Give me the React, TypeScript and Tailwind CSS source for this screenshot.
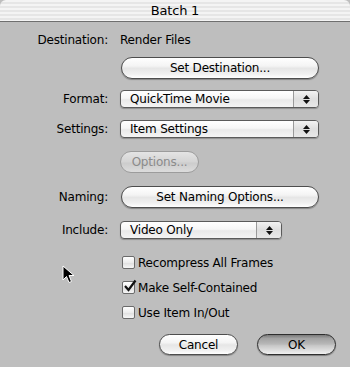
import React from 'react';

const font = "font-['DejaVu_Sans','Liberation_Sans',sans-serif]";

// glossy aqua push button
const AquaButton: React.FC<{ label: string; className?: string; disabled?: boolean; isDefault?: boolean }> = ({
  label,
  className = '',
  disabled,
  isDefault,
}) => {
  const skin = isDefault
    ? 'border-[#2e2e2e] bg-[linear-gradient(to_bottom,#7a7a7a_0%,#a2a2a2_18%,#b8b8b8_48%,#c6c6c6_55%,#e2e2e2_85%,#f0f0f0_100%)] shadow-[0_1px_1px_rgba(0,0,0,0.35)]'
    : disabled
    ? 'border-[#9c9c9c] bg-[linear-gradient(to_bottom,#e4e4e4_0%,#d4d4d4_50%,#cccccc_55%,#dcdcdc_100%)] text-[#8b8b8b]'
    : 'border-[#4d4d4d] bg-[linear-gradient(to_bottom,#ffffff_0%,#f4f4f4_40%,#e6e6e6_52%,#f0f0f0_80%,#ffffff_100%)] shadow-[0_1px_1px_rgba(0,0,0,0.3)]';
  return (
    <div
      className={`flex items-center justify-center rounded-full border text-[12px] leading-none tracking-[-0.2px] ${skin} ${className}`}
    >
      {label}
    </div>
  );
};

// popup menu with the up/down arrows on the right
const Popup: React.FC<{ value: string; width: string }> = ({ value, width }) => (
  <div
    className={`flex h-[18px] ${width} items-stretch overflow-hidden rounded-[4px] border border-[#5a5a5a] bg-[linear-gradient(to_bottom,#ffffff_0%,#f6f6f6_45%,#e9e9e9_55%,#f4f4f4_100%)] shadow-[0_1px_1px_rgba(0,0,0,0.25)]`}
  >
    <div className="flex flex-1 items-center pl-[9px] text-[12px] leading-none tracking-[-0.2px]">{value}</div>
    <div className="flex w-[25px] flex-col items-center justify-center gap-[1px] border-l border-[#9a9a9a] bg-[linear-gradient(to_bottom,#f2f2f2,#dedede_50%,#e8e8e8)]">
      <svg width="7" height="4" viewBox="0 0 7 4">
        <path d="M3.5 0 L7 4 L0 4 Z" fill="#111" />
      </svg>
      <svg width="7" height="4" viewBox="0 0 7 4">
        <path d="M0 0 L7 0 L3.5 4 Z" fill="#111" />
      </svg>
    </div>
  </div>
);

const Checkbox: React.FC<{ label: string; checked?: boolean }> = ({ label, checked }) => (
  <div className="flex h-[25px] items-center">
    <div className="relative ml-[2px] h-[13px] w-[13px] rounded-[2px] border border-[#6b6b6b] bg-[linear-gradient(to_bottom,#ffffff,#ececec_50%,#e0e0e0_55%,#f6f6f6)]">
      {checked && (
        <svg className="absolute left-[0px] top-[-3px]" width="14" height="14" viewBox="0 0 14 14">
          <path d="M2 7 L5.5 11 L12.5 1.5" stroke="#111" strokeWidth="2.2" fill="none" strokeLinejoin="miter" />
        </svg>
      )}
    </div>
    <span className="ml-[3px] text-[12px] leading-none tracking-[-0.2px]">{label}</span>
  </div>
);

const Label: React.FC<{ text: string }> = ({ text }) => (
  <div className="w-[110px] pr-[2px] text-right text-[12px] leading-none tracking-[-0.2px]">{text}</div>
);

export default function App() {
  return (
    <div className={`relative h-[367px] w-[350px] overflow-hidden bg-[#bebebe] text-black ${font}`}>
      {/* title bar */}
      <div className="flex h-[22px] items-center justify-center rounded-t-[6px] border-b border-[#6f6f6f] bg-[repeating-linear-gradient(to_bottom,#f4f4f4_0px,#f4f4f4_2px,#e6e6e6_2px,#e6e6e6_4px)] text-[13px] tracking-[-0.2px]">
        Batch 1
      </div>

      <div className="flex flex-col">
        <div className="mt-[12px] flex h-[12px] items-center">
          <Label text="Destination:" />
          <span className="ml-[10px] text-[12px] leading-none tracking-[-0.2px]">Render Files</span>
        </div>

        <div className="mt-[11px] flex">
          <AquaButton label="Set Destination..." className="ml-[121px] h-[22px] w-[198px]" />
        </div>

        <div className="mt-[11px] flex items-center">
          <Label text="Format:" />
          <div className="ml-[10px]">
            <Popup value="QuickTime Movie" width="w-[199px]" />
          </div>
        </div>

        <div className="mt-[12px] flex items-center">
          <Label text="Settings:" />
          <div className="ml-[10px]">
            <Popup value="Item Settings" width="w-[199px]" />
          </div>
        </div>

        <div className="mt-[13px] flex">
          <AquaButton label="Options..." disabled className="ml-[120px] h-[22px] w-[79px]" />
        </div>

        <div className="mt-[13px] flex items-center">
          <Label text="Naming:" />
          <AquaButton label="Set Naming Options..." className="ml-[11px] h-[22px] w-[198px]" />
        </div>

        <div className="mt-[13px] flex items-center">
          <Label text="Include:" />
          <div className="ml-[10px]">
            <Popup value="Video Only" width="w-[162px]" />
          </div>
        </div>

        <div className="ml-[120px] mt-[11px] flex flex-col">
          <Checkbox label="Recompress All Frames" />
          <Checkbox label="Make Self-Contained" checked />
          <Checkbox label="Use Item In/Out" />
        </div>

        <div className="mt-[9px] flex justify-end gap-[19px] pr-[14px]">
          <AquaButton label="Cancel" className="h-[21px] w-[79px]" />
          <AquaButton label="OK" isDefault className="h-[21px] w-[79px]" />
        </div>
      </div>

      {/* mouse pointer */}
      <svg className="absolute left-[62px] top-[265px]" width="14" height="20" viewBox="0 0 14 20">
        <path d="M1 1 L1 15 L4.5 11.5 L7 17.5 L9.5 16.5 L7 10.5 L12 10.5 Z" fill="#000" stroke="#fff" strokeWidth="1" />
      </svg>
    </div>
  );
}
